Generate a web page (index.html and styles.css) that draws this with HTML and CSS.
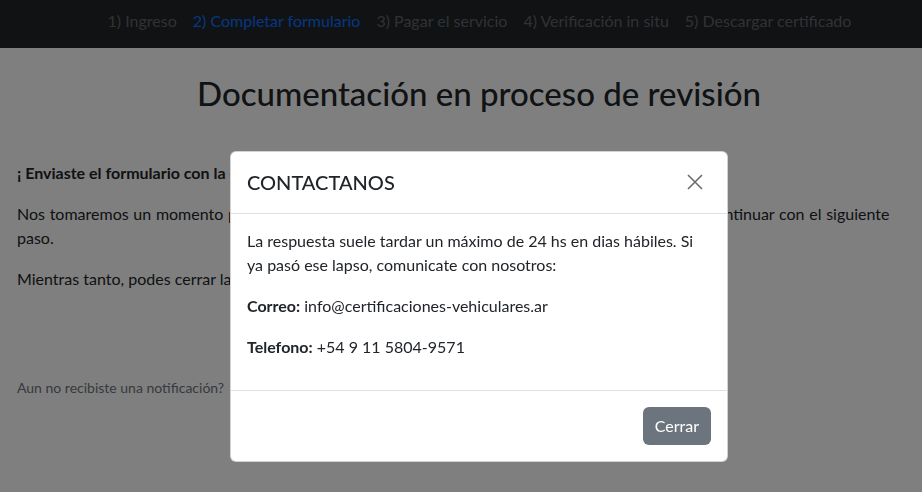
FILE: index.html
```html
<!DOCTYPE html>
<html lang="es">
<head>
<meta charset="utf-8">
<title>Documentación en proceso de revisión</title>
<link rel="stylesheet" href="styles.css">
</head>
<body>
<nav class="navbar">
  <a class="nav-link">1) Ingreso</a>
  <a class="nav-link active">2) Completar formulario</a>
  <a class="nav-link">3) Pagar el servicio</a>
  <a class="nav-link">4) Verificación in situ</a>
  <a class="nav-link">5) Descargar certificado</a>
</nav>
<main class="container">
  <h1 class="title">Documentación en proceso de revisión</h1>
  <p class="lead-bold">¡ Enviaste el formulario con la documentación solicitada!</p>
  <p class="wide">Nos tomaremos un momento para revisar tu documentación. Te enviaremos una notificación para continuar con el siguiente paso.</p>
  <p>Mientras tanto, podes cerrar la página.</p>
  <p class="small-note">Aun no recibiste una notificación?<a class="link">Contactanos</a></p>
</main>

<div class="backdrop"></div>
<div class="modal">
  <div class="modal-content">
    <div class="modal-header">
      <h5 class="modal-title">CONTACTANOS</h5>
      <button class="btn-close" aria-label="Close">
        <svg width="16" height="16" viewBox="0 0 16 16"><path d="M1 1L15 15M15 1L1 15" stroke="#6c6c6c" stroke-width="1.6" fill="none"/></svg>
      </button>
    </div>
    <div class="modal-body">
      <p>La respuesta suele tardar un máximo de 24 hs en dias hábiles. Si ya pasó ese lapso, comunicate con nosotros:</p>
      <p><b>Correo:</b> info@certificaciones-vehiculares.ar</p>
      <p><b>Telefono:</b> +54 9 11 5804-9571</p>
    </div>
    <div class="modal-footer">
      <button class="btn">Cerrar</button>
    </div>
  </div>
</div>
</body>
</html>
```

FILE: styles.css
```css
* { box-sizing: border-box; }
html, body { margin: 0; }
body {
  font-family: Lato, "Noto Sans", sans-serif;
  font-size: 16px;
  line-height: 1.5;
  color: #212529;
  background: #fff;
  height: 492px;
  overflow: hidden;
}
.navbar {
  height: 48px;
  background: #212529;
  display: flex;
  justify-content: center;
  align-items: center;
  padding: 0 0 6px 37px;
}
.nav-link {
  padding: 0 8px;
  color: rgba(255,255,255,.3);
  text-decoration: none;
}
.nav-link.active { color: #0d6efd; }
.container {
  padding: 26px 17px 0;
}
.title {
  margin: 0 0 47px;
  padding-left: 36px;
  text-align: center;
  font-size: 33px;
  font-weight: 500;
  line-height: 1.2;
}
p { margin: 0 0 17px; }
.wide { word-spacing: 0.6px; }
.lead-bold { font-weight: 700; }
.small-note {
  margin-top: 86px;
  font-size: 14px;
  color: #6c757d;
}
.link { color: #0d6efd; margin-left: 12px; }
.backdrop {
  position: fixed;
  inset: 0;
  background: rgba(0,0,0,.5);
}
.modal {
  position: fixed;
  top: 151px;
  left: 230px;
  width: 498px;
}
.modal-content {
  background: #fff;
  border: 1px solid rgba(0,0,0,.175);
  border-radius: 6px;
}
.modal-header {
  display: flex;
  align-items: center;
  justify-content: space-between;
  padding: 16px 16px 17px;
  border-bottom: 1px solid #dee2e6;
}
.modal-title {
  margin: 0;
  font-size: 20px;
  font-weight: 500;
  line-height: 1.4;
}
.btn-close {
  border: 0;
  background: none;
  padding: 0;
  margin-right: 8px;
  width: 16px;
  height: 16px;
  display: flex;
}
.modal-body { padding: 15px 16px 14px; }
.modal-body p { margin: 0 0 17px; }
.modal-footer {
  display: flex;
  justify-content: flex-end;
  padding: 12px;
  border-top: 1px solid #dee2e6;
}
.btn {
  margin: 4px;
  height: 38px;
  padding: 0 12px;
  font: inherit;
  color: #fff;
  background: #6c757d;
  border: 0;
  border-radius: 6px;
}
```
